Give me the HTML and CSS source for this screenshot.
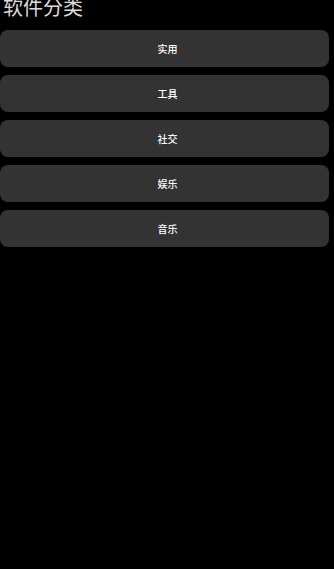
FILE: index.html
```html
<!DOCTYPE html>
<html lang="zh">
<head>
    <meta charset="UTF-8">
    <meta name="viewport" content="width=device-width, initial-scale=1.0">
    <title>软件分类</title>
    <link rel="stylesheet" href="styles.css">
</head>
<body>

    <div class="page">
        <h1 class="title">软件分类</h1>
        <div class="list">
            <button class="item">实用</button>
            <button class="item">工具</button>
            <button class="item">社交</button>
            <button class="item">娱乐</button>
            <button class="item">音乐</button>
        </div>
    </div>

</body>
</html>
```

FILE: styles.css
```css
body {
    font-family: 'Noto Sans', 'Noto Sans CJK SC', sans-serif;
    background-color: #000;
    margin: 0;
    height: 100vh;
    overflow: hidden;
}

.page {
    width: 329px;
}

.title {
    font-size: 20px;
    font-weight: normal;
    line-height: 24px;
    color: #dcdcdc;
    margin: -4px 0 0 3px;
    height: 26px;
}

.list {
    display: flex;
    flex-direction: column;
    gap: 8px;
    margin-top: 8px;
}

.item {
    height: 37px;
    padding: 0 0 0 6px;
    font-family: inherit;
    font-size: 10px;
    font-weight: 500;
    border: none;
    border-radius: 8px;
    background-color: #333;
    color: #fff;
    cursor: pointer;
}
```
